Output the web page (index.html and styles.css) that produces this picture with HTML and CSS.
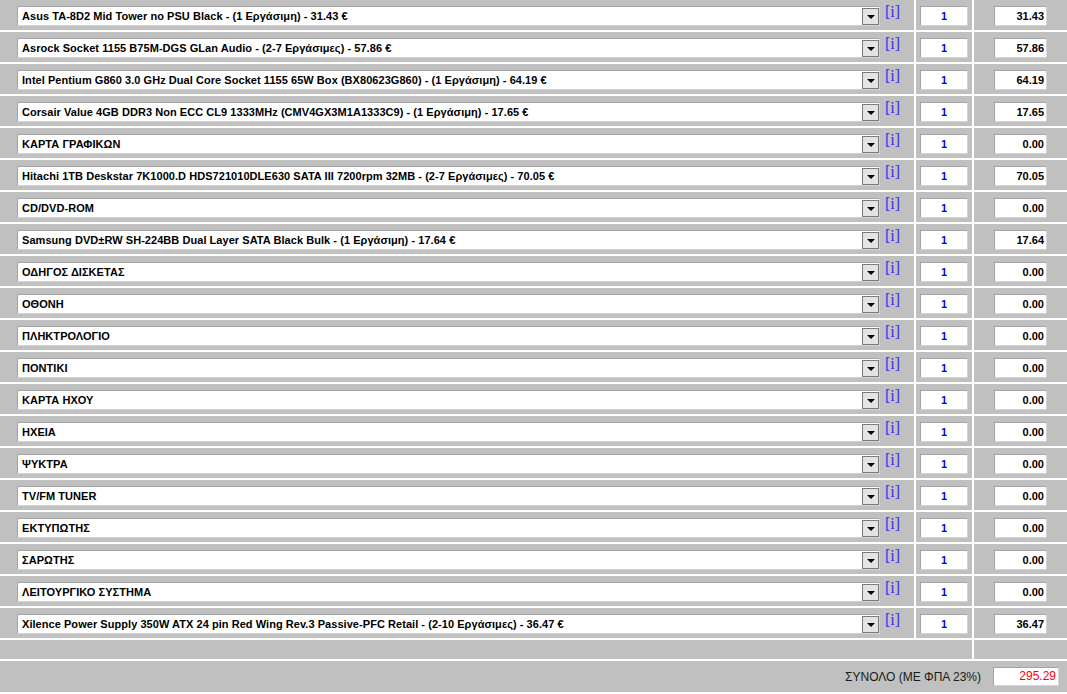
FILE: index.html
```html
<!DOCTYPE html>
<html>
<head>
<meta charset="utf-8">
<link rel="stylesheet" href="styles.css">
</head>
<body>
<div class="sheet">
  <div class="c-item"><div class="sel"><span class="sel-text">Asus TA-8D2 Mid Tower no PSU Black - (1 Εργάσιμη) - 31.43 €</span><span class="sel-btn"></span></div><a class="info">[i]</a></div>
  <div class="c-qty"><div class="qty">1</div></div>
  <div class="c-price"><div class="price">31.43</div></div>

  <div class="c-item"><div class="sel"><span class="sel-text">Asrock Socket 1155 B75M-DGS GLan Audio - (2-7 Εργάσιμες) - 57.86 €</span><span class="sel-btn"></span></div><a class="info">[i]</a></div>
  <div class="c-qty"><div class="qty">1</div></div>
  <div class="c-price"><div class="price">57.86</div></div>

  <div class="c-item"><div class="sel"><span class="sel-text">Intel Pentium G860 3.0 GHz Dual Core Socket 1155 65W Box (BX80623G860) - (1 Εργάσιμη) - 64.19 €</span><span class="sel-btn"></span></div><a class="info">[i]</a></div>
  <div class="c-qty"><div class="qty">1</div></div>
  <div class="c-price"><div class="price">64.19</div></div>

  <div class="c-item"><div class="sel"><span class="sel-text">Corsair Value 4GB DDR3 Non ECC CL9 1333MHz (CMV4GX3M1A1333C9) - (1 Εργάσιμη) - 17.65 €</span><span class="sel-btn"></span></div><a class="info">[i]</a></div>
  <div class="c-qty"><div class="qty">1</div></div>
  <div class="c-price"><div class="price">17.65</div></div>

  <div class="c-item"><div class="sel"><span class="sel-text">ΚΑΡΤΑ ΓΡΑΦΙΚΩΝ</span><span class="sel-btn"></span></div><a class="info">[i]</a></div>
  <div class="c-qty"><div class="qty">1</div></div>
  <div class="c-price"><div class="price">0.00</div></div>

  <div class="c-item"><div class="sel"><span class="sel-text">Hitachi 1TB Deskstar 7K1000.D HDS721010DLE630 SATA III 7200rpm 32MB - (2-7 Εργάσιμες) - 70.05 €</span><span class="sel-btn"></span></div><a class="info">[i]</a></div>
  <div class="c-qty"><div class="qty">1</div></div>
  <div class="c-price"><div class="price">70.05</div></div>

  <div class="c-item"><div class="sel"><span class="sel-text">CD/DVD-ROM</span><span class="sel-btn"></span></div><a class="info">[i]</a></div>
  <div class="c-qty"><div class="qty">1</div></div>
  <div class="c-price"><div class="price">0.00</div></div>

  <div class="c-item"><div class="sel"><span class="sel-text">Samsung DVD±RW SH-224BB Dual Layer SATA Black Bulk - (1 Εργάσιμη) - 17.64 €</span><span class="sel-btn"></span></div><a class="info">[i]</a></div>
  <div class="c-qty"><div class="qty">1</div></div>
  <div class="c-price"><div class="price">17.64</div></div>

  <div class="c-item"><div class="sel"><span class="sel-text">ΟΔΗΓΟΣ ΔΙΣΚΕΤΑΣ</span><span class="sel-btn"></span></div><a class="info">[i]</a></div>
  <div class="c-qty"><div class="qty">1</div></div>
  <div class="c-price"><div class="price">0.00</div></div>

  <div class="c-item"><div class="sel"><span class="sel-text">ΟΘΟΝΗ</span><span class="sel-btn"></span></div><a class="info">[i]</a></div>
  <div class="c-qty"><div class="qty">1</div></div>
  <div class="c-price"><div class="price">0.00</div></div>

  <div class="c-item"><div class="sel"><span class="sel-text">ΠΛΗΚΤΡΟΛΟΓΙΟ</span><span class="sel-btn"></span></div><a class="info">[i]</a></div>
  <div class="c-qty"><div class="qty">1</div></div>
  <div class="c-price"><div class="price">0.00</div></div>

  <div class="c-item"><div class="sel"><span class="sel-text">ΠΟΝΤΙΚΙ</span><span class="sel-btn"></span></div><a class="info">[i]</a></div>
  <div class="c-qty"><div class="qty">1</div></div>
  <div class="c-price"><div class="price">0.00</div></div>

  <div class="c-item"><div class="sel"><span class="sel-text">ΚΑΡΤΑ ΗΧΟΥ</span><span class="sel-btn"></span></div><a class="info">[i]</a></div>
  <div class="c-qty"><div class="qty">1</div></div>
  <div class="c-price"><div class="price">0.00</div></div>

  <div class="c-item"><div class="sel"><span class="sel-text">ΗΧΕΙΑ</span><span class="sel-btn"></span></div><a class="info">[i]</a></div>
  <div class="c-qty"><div class="qty">1</div></div>
  <div class="c-price"><div class="price">0.00</div></div>

  <div class="c-item"><div class="sel"><span class="sel-text">ΨΥΚΤΡΑ</span><span class="sel-btn"></span></div><a class="info">[i]</a></div>
  <div class="c-qty"><div class="qty">1</div></div>
  <div class="c-price"><div class="price">0.00</div></div>

  <div class="c-item"><div class="sel"><span class="sel-text">TV/FM TUNER</span><span class="sel-btn"></span></div><a class="info">[i]</a></div>
  <div class="c-qty"><div class="qty">1</div></div>
  <div class="c-price"><div class="price">0.00</div></div>

  <div class="c-item"><div class="sel"><span class="sel-text">ΕΚΤΥΠΩΤΗΣ</span><span class="sel-btn"></span></div><a class="info">[i]</a></div>
  <div class="c-qty"><div class="qty">1</div></div>
  <div class="c-price"><div class="price">0.00</div></div>

  <div class="c-item"><div class="sel"><span class="sel-text">ΣΑΡΩΤΗΣ</span><span class="sel-btn"></span></div><a class="info">[i]</a></div>
  <div class="c-qty"><div class="qty">1</div></div>
  <div class="c-price"><div class="price">0.00</div></div>

  <div class="c-item"><div class="sel"><span class="sel-text">ΛΕΙΤΟΥΡΓΙΚΟ ΣΥΣΤΗΜΑ</span><span class="sel-btn"></span></div><a class="info">[i]</a></div>
  <div class="c-qty"><div class="qty">1</div></div>
  <div class="c-price"><div class="price">0.00</div></div>

  <div class="c-item"><div class="sel"><span class="sel-text">Xilence Power Supply 350W ATX 24 pin Red Wing Rev.3 Passive-PFC Retail - (2-10 Εργάσιμες) - 36.47 €</span><span class="sel-btn"></span></div><a class="info">[i]</a></div>
  <div class="c-qty"><div class="qty">1</div></div>
  <div class="c-price"><div class="price">36.47</div></div>

  <div class="c-blank-wide"></div>
  <div class="c-blank"></div>

  <div class="c-total"><span class="total-label">ΣΥΝΟΛΟ (ΜΕ ΦΠΑ 23%)</span><div class="total">295.29</div></div>
</div>
</body>
</html>
```

FILE: styles.css
```css
html, body {
  margin: 0;
  padding: 0;
  background: #ffffff;
}

body {
  font-family: "Liberation Sans", Arial, sans-serif;
  font-size: 11px;
  color: #000;
}

.sheet {
  display: grid;
  grid-template-columns: 914px 56px 93px;
  grid-template-rows: repeat(20, 30px) 19px 31px;
  gap: 2px;
  width: 1067px;
}

.c-item, .c-qty, .c-price, .c-blank-wide, .c-blank, .c-total {
  background: #c0c0c0;
}

.c-item {
  display: flex;
  align-items: flex-start;
  padding: 6px 0 0 17px;
}

.sel {
  box-sizing: border-box;
  width: 863px;
  height: 20px;
  background: #fff;
  border: 1px solid #a4a4a4;
  border-right-color: #d4d4d4;
  border-bottom-color: #d4d4d4;
  display: flex;
  align-items: center;
  justify-content: space-between;
  padding-left: 4px;
}

.sel-text {
  font-weight: bold;
  white-space: nowrap;
  line-height: 18px;
  letter-spacing: 0.05px;
}

.sel-btn {
  box-sizing: border-box;
  width: 17px;
  height: 17px;
  background: #e4e4e4;
  border: 1px solid #7a7a7a;
  display: flex;
  align-items: center;
  justify-content: center;
}

.sel-btn::after {
  content: "";
  width: 0;
  height: 0;
  border-left: 4px solid transparent;
  border-right: 4px solid transparent;
  border-top: 4px solid #000;
  margin-top: 2px;
}

.info {
  margin-left: 5px;
  margin-top: -3px;
  font-family: "Liberation Serif", "Times New Roman", serif;
  font-size: 16px;
  line-height: 18px;
  color: #3030ff;
  text-decoration: none;
}

.c-qty, .c-price {
  display: flex;
  justify-content: center;
  align-items: flex-start;
  padding-top: 6px;
}

.qty, .price {
  box-sizing: border-box;
  height: 20px;
  background: #fff;
  border: 1px solid #a4a4a4;
  border-right-color: #d4d4d4;
  border-bottom-color: #d4d4d4;
  font-weight: bold;
  line-height: 18px;
}

.qty {
  width: 48px;
  color: #0000ff;
  text-align: center;
}

.price {
  width: 53px;
  text-align: right;
  padding-right: 2px;
}

.c-blank-wide {
  grid-column: 1 / 3;
}

.c-total {
  grid-column: 1 / 4;
  display: flex;
  justify-content: flex-end;
  align-items: center;
  padding-right: 8px;
}

.total-label {
  font-size: 12px;
  color: #1a1a1a;
  margin-right: 12px;
}

.total {
  box-sizing: border-box;
  width: 66px;
  height: 19px;
  background: #fff;
  border: 1px solid #a4a4a4;
  border-right-color: #d4d4d4;
  border-bottom-color: #d4d4d4;
  color: #ff0000;
  font-size: 12px;
  line-height: 17px;
  text-align: right;
  padding-right: 2px;
}
```
